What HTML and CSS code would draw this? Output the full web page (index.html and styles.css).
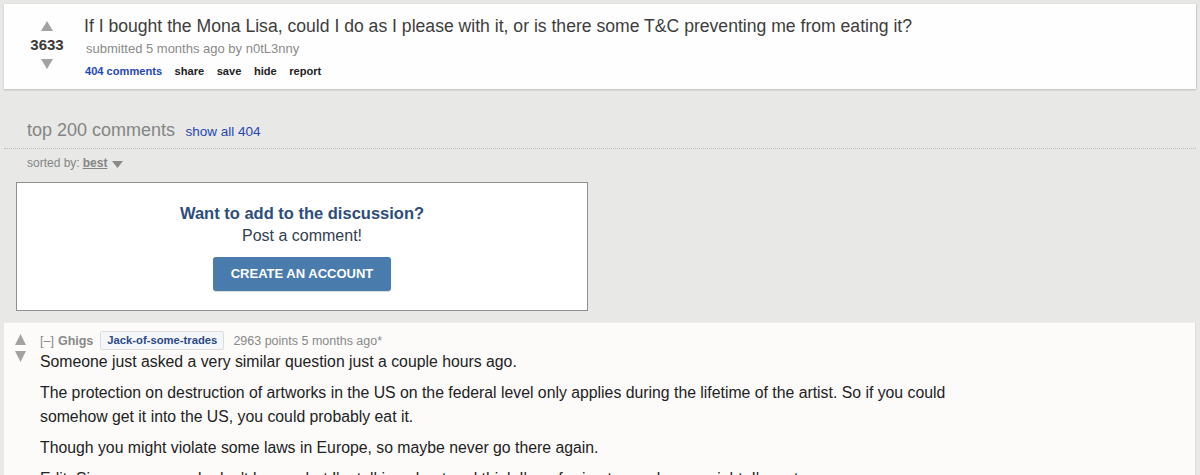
FILE: index.html
```html
<!DOCTYPE html>
<html>
<head>
<meta charset="utf-8">
<link rel="stylesheet" href="styles.css">
</head>
<body>
<div class="page">
  <div class="link-card">
    <div class="votes">
      <svg class="arrow" width="12" height="10" viewBox="0 0 12 10"><polygon points="6,0 12,10 0,10" fill="#a3a3a3"/></svg>
      <div class="score">3633</div>
      <svg class="arrow" width="12" height="10" viewBox="0 0 12 10"><polygon points="0,0 12,0 6,10" fill="#a3a3a3"/></svg>
    </div>
    <div class="entry">
      <div class="title">If I bought the Mona Lisa, could I do as I please with it, or is there some T&amp;C preventing me from eating it?</div>
      <div class="tagline">submitted 5 months ago by n0tL3nny</div>
      <ul class="buttons">
        <li class="comments">404 comments</li>
        <li>share</li>
        <li>save</li>
        <li>hide</li>
        <li>report</li>
      </ul>
    </div>
  </div>

  <div class="panel-head">
    <span class="panel-title">top 200 comments</span>
    <span class="show-all">show all 404</span>
  </div>
  <div class="sorted">sorted by: <span class="sort-choice">best</span><svg class="sort-caret" width="11" height="7" viewBox="0 0 11 7"><polygon points="0,0 11,0 5.5,7" fill="#8a8a8a"/></svg></div>

  <div class="signup">
    <div class="signup-q">Want to add to the discussion?</div>
    <div class="signup-p">Post a comment!</div>
    <div class="signup-btn">CREATE AN ACCOUNT</div>
  </div>

  <div class="comment">
    <div class="c-votes">
      <svg width="11" height="11" viewBox="0 0 11 11"><polygon points="5.5,0 11,11 0,11" fill="#a3a3a3"/></svg>
      <svg width="11" height="11" viewBox="0 0 11 11"><polygon points="0,0 11,0 5.5,11" fill="#a3a3a3"/></svg>
    </div>
    <div class="c-entry">
      <div class="c-tagline">
        <span class="expand">[–]</span>
        <span class="author">Ghigs</span>
        <span class="flair">Jack-of-some-trades</span>
        <span class="c-meta">2963 points 5 months ago*</span>
      </div>
      <div class="md">
        <p>Someone just asked a very similar question just a couple hours ago.</p>
        <p>The protection on destruction of artworks in the US on the federal level only applies during the lifetime of the artist. So if you could somehow get it into the US, you could probably eat it.</p>
        <p>Though you might violate some laws in Europe, so maybe never go there again.</p>
        <p>Edit: Since some people don't know what I'm talking about and think I'm referring to regular copyright, I'm not:</p>
      </div>
    </div>
  </div>
</div>
</body>
</html>
```

FILE: styles.css
```css
html, body {
  margin: 0;
  padding: 0;
  background: #e8e8e6;
  font-family: "Liberation Sans", Arial, Helvetica, sans-serif;
  overflow: hidden;
}

.page {
  padding: 4px;
}

.link-card {
  display: flex;
  height: 85px;
  background: #fefefe;
  box-shadow: 0 1px 2px rgba(0, 0, 0, 0.18), 1px 0 1px rgba(0, 0, 0, 0.06);
}

.votes {
  width: 74px;
  padding-left: 6px;
  padding-top: 17px;
  display: flex;
  flex-direction: column;
  align-items: center;
}

.arrow {
  display: block;
}

.score {
  font-size: 15px;
  font-weight: bold;
  line-height: 18px;
  color: #3a3a3a;
  margin: 5px 0 5px;
}

.entry {
  padding-top: 11px;
}

.title {
  font-size: 17.6px;
  line-height: 22px;
  color: #3d3d3d;
}

.tagline {
  margin-top: 4px;
  margin-left: 2px;
  font-size: 13px;
  line-height: 16px;
  color: #8a8a8a;
}

.buttons {
  list-style: none;
  margin: 7px 0 0 1px;
  padding: 0;
  display: flex;
  gap: 12.5px;
  font-size: 11.1px;
  line-height: 15px;
  font-weight: bold;
  color: #222;
}

.buttons .comments {
  color: #2647b3;
}

.panel-head {
  margin-top: 30px;
  padding-left: 23px;
  padding-bottom: 5px;
  border-bottom: 1px dotted #bdbdbd;
  line-height: 22px;
}

.panel-title {
  font-size: 18px;
  color: #858585;
}

.show-all {
  font-size: 13.5px;
  color: #2647b3;
  margin-left: 6px;
}

.sorted {
  margin-top: 7px;
  padding-left: 23px;
  font-size: 12px;
  line-height: 15px;
  color: #858585;
  display: flex;
  align-items: center;
}

.sort-choice {
  font-weight: bold;
  text-decoration: underline;
  margin-left: 3px;
}

.sort-caret {
  margin-left: 5px;
  margin-top: 1px;
}

.signup {
  margin: 11px 0 0 12px;
  width: 572px;
  height: 129px;
  box-sizing: border-box;
  border: 1px solid #8f8f8f;
  background: #fff;
  display: flex;
  flex-direction: column;
  align-items: center;
  padding-top: 20px;
}

.signup-q {
  font-size: 16.5px;
  line-height: 20px;
  font-weight: bold;
  color: #2d4d7c;
}

.signup-p {
  margin-top: 3px;
  font-size: 16px;
  line-height: 20px;
  color: #33404f;
}

.signup-btn {
  margin-top: 11px;
  width: 178px;
  height: 34px;
  line-height: 34px;
  text-align: center;
  background: #4a7bad;
  border-radius: 3px;
  color: #fff;
  font-size: 13px;
  font-weight: bold;
  box-shadow: 0 1px 1px rgba(0, 0, 0, 0.15);
}

.comment {
  margin-top: 11px;
  background: #fcfbfa;
  border-top: 1px solid #efedeb;
  border-right: 1px solid #dcdcda;
  display: flex;
  padding-top: 8px;
  height: 200px;
}

.c-votes {
  width: 36px;
  display: flex;
  flex-direction: column;
  align-items: center;
  padding-top: 3px;
  gap: 6px;
  box-sizing: border-box;
  padding-right: 4px;
}

.c-votes svg {
  display: block;
}

.c-entry {
  flex: 1;
}

.c-tagline {
  display: flex;
  align-items: center;
  height: 19px;
  font-size: 12.5px;
  color: #888;
}

.author {
  font-weight: bold;
  margin-left: 4px;
}

.flair {
  margin-left: 7px;
  height: 19px;
  box-sizing: border-box;
  padding: 0 6px;
  line-height: 17px;
  border: 1px solid #dcdde0;
  border-radius: 2px;
  background: #f4f6f9;
  color: #2c4a86;
  font-weight: bold;
  font-size: 11.25px;
}

.c-meta {
  margin-left: 9px;
}

.md {
  max-width: 960px;
  font-size: 15.8px;
  line-height: 24px;
  color: #222;
}

.md p {
  margin: 0 0 7px;
}
```
